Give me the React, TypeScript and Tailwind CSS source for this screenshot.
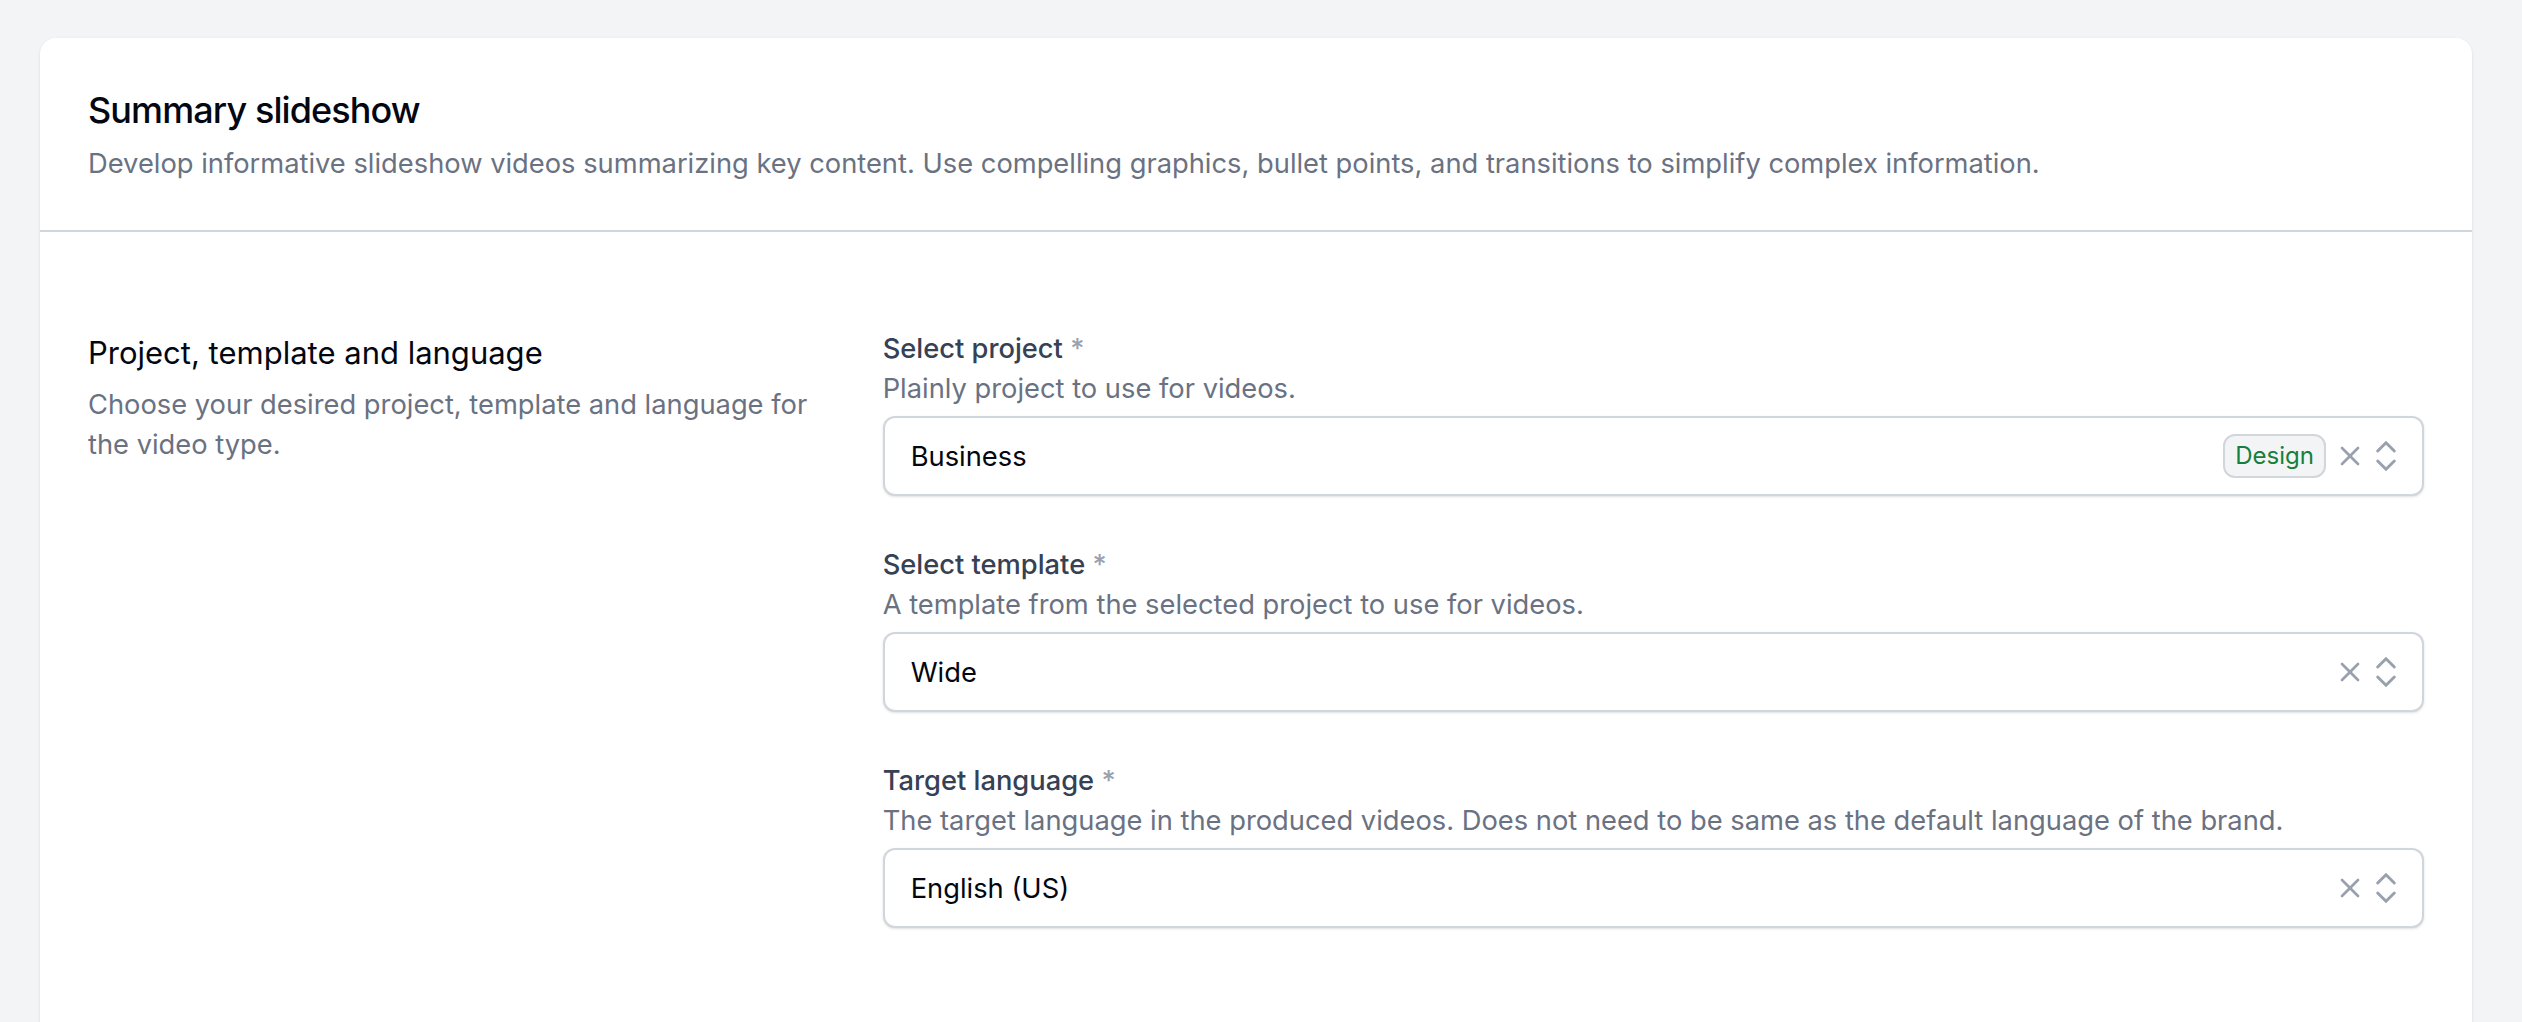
import { ChevronsUpDown, X } from "lucide-react";

const fields = [
  {
    label: "Select project",
    help: "Plainly project to use for videos.",
    value: "Business",
    tag: "Design",
  },
  {
    label: "Select template",
    help: "A template from the selected project to use for videos.",
    value: "Wide",
  },
  {
    label: "Target language",
    help: "The target language in the produced videos. Does not need to be same as the default language of the brand.",
    value: "English (US)",
  },
];

type FieldProps = {
  label: string;
  help: string;
  value: string;
  tag?: string;
};

const Field = ({ label, help, value, tag }: FieldProps) => {
  return (
    <div>
      <div className="pt-px text-[27.3px] leading-10 font-medium text-gray-700">
        {label} <span className="text-gray-400">*</span>
      </div>
      <p className="text-[27.3px] leading-10 text-gray-500">{help}</p>
      {/* Combobox */}
      <div className="mt-1.75 h-20 flex items-center rounded-xl border-2 border-gray-300 bg-white pl-6.5 pr-4 shadow-sm">
        <span className="flex-1 pt-0.5 text-[27.3px] text-gray-950">{value}</span>
        {tag && (
          <span className="mr-2 rounded-xl border-2 border-gray-300 bg-gray-100 px-2.5 py-1 text-2xl text-[#15803d]">
            {tag}
          </span>
        )}
        <X className="size-8 text-gray-400" />
        <ChevronsUpDown className="size-10 text-gray-400" strokeWidth={1.75} />
      </div>
    </div>
  );
};

export default function App() {
  return (
    <div className="h-screen overflow-hidden bg-gray-100 pt-9.5 pl-10 pr-12.5 font-['Inter',sans-serif]">
      <div className="h-full rounded-t-2xl bg-white shadow-sm">
        {/* Header */}
        <div className="border-b-2 border-gray-300 px-12 pt-12 pb-11.5">
          <h1 className="text-4xl leading-12 font-medium tracking-tight text-gray-950">Summary slideshow</h1>
          <p className="mt-2.5 text-[27.3px] leading-10 text-gray-500">
            Develop informative slideshow videos summarizing key content. Use compelling graphics,
            bullet points, and transitions to simplify complex information.
          </p>
        </div>
        {/* Form */}
        <div className="grid grid-cols-3 gap-x-12 px-12 py-24">
          <div className="pt-px">
            <h2 className="text-[31px] leading-12 text-gray-950">Project, template and language</h2>
            <p className="mt-2 text-[27.3px] leading-10 text-gray-500">
              Choose your desired project, template and language for the video type.
            </p>
          </div>
          <div className="col-span-2 flex flex-col gap-12">
            {fields.map((field) => (
              <Field key={field.label} {...field} />
            ))}
          </div>
        </div>
      </div>
    </div>
  );
}
